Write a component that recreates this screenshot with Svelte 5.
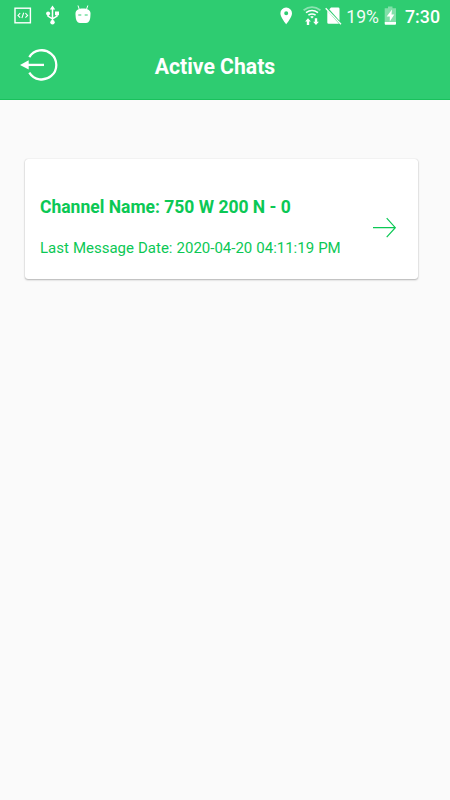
<script lang="ts">
  type Chat = {
    channelName: string;
    lastMessageDate: string;
  };

  type Props = {
    chats?: Chat[];
    onLogout?: () => void;
    onOpenChat?: (chat: Chat) => void;
  };

  let {
    chats = [{ channelName: '750 W 200 N - 0', lastMessageDate: '2020-04-20 04:11:19 PM' }],
    onLogout = () => {},
    onOpenChat = () => {}
  }: Props = $props();
</script>

<div class="screen">
  <header>
    <div class="status-bar">
      <div class="notifications">
        <svg width="18" height="32" viewBox="0 0 18 32" fill="none" stroke="#fff">
          <rect x="1" y="8.2" width="15.4" height="14.6" stroke-width="1.4" />
          <path d="M6.2 13.2 4 15.4l2.2 2.2M11.4 13.2l2.2 2.2-2.2 2.2M9.7 12.8l-1.8 5.3" stroke-width="1.1" />
        </svg>
        <svg class="usb" width="14" height="32" viewBox="0 0 14 32">
          <path d="M6.5 8v14M2 13v3.2l4.5 2.7M11 13v3.2l-4.5 2.7" fill="none" stroke="#fff" stroke-width="1.5" />
          <path d="m6.5 5.6 2.7 3.9H3.8zM9 11.6h4v3.7H9z" fill="#fff" />
          <circle cx="2.1" cy="13.4" r="2" fill="#fff" />
          <circle cx="6.5" cy="22.2" r="2.2" fill="#fff" />
        </svg>
        <svg class="robot" width="17" height="32" viewBox="0 0 17 32">
          <path d="M3 5.5 4.5 10M12.8 5.5 11.3 10" stroke="#fff" stroke-width="1" />
          <path d="M.5 13.5C.5 10.3 3.5 8.5 8 8.5s7.5 1.8 7.5 5c0 5-.8 9.5-4.5 9.5H5C1.3 23 .5 18.5.5 13.5z" fill="#fff" />
          <path d="M3.3 15h3M9.7 15h3" stroke="#2ecc71" stroke-width="1" />
        </svg>
      </div>
      <div class="system">
        <svg width="13" height="32" viewBox="0 0 13 32">
          <path
            d="M6.2 7.5A5.7 5.7 0 0 0 .4 13.2c0 4.2 5.8 11 5.8 11s5.8-6.8 5.8-11a5.7 5.7 0 0 0-5.8-5.7zm0 3.7a2 2 0 1 1 0 4 2 2 0 0 1 0-4z"
            fill="#fff"
          />
        </svg>
        <svg class="wifi" width="20" height="32" viewBox="0 0 20 32">
          <path d="M1.6 10.3Q10 4 18.4 10.3" fill="none" stroke="#fff" stroke-opacity=".45" stroke-width="1.8" />
          <path d="M4 12.7Q10 8.3 16 12.7M6.4 15.2q3.6-2.4 7.2 0" fill="none" stroke="#fff" stroke-width="1.6" />
          <path d="m8.2 16.8 1.8-.8 1.8.8-1.8 1.8z" fill="#fff" />
          <path d="m6 18.2 2.9 3.3H7.2V25H4.8v-3.5H3.1zM14 25l2.9-3.3h-1.7v-3.5h-2.4v3.5h-1.7z" fill="#fff" />
        </svg>
        <svg class="sim" width="17" height="32" viewBox="0 0 17 32">
          <path d="M6 7.5h7.2q1.3 0 1.3 1.3v12L4.3 9.3zM2.3 10.7 14 23.8H3.6q-1.3 0-1.3-1.3z" fill="#fff" />
          <path d="m.7 8.2 15.3 16" stroke="#fff" stroke-width="1.3" />
        </svg>
        <span class="percent">19%</span>
        <svg class="battery" width="13" height="32" viewBox="0 0 13 32">
          <path d="M4 6.5h4.5v1.8H12V22H.7V8.3H4z" fill="#fff" fill-opacity=".4" />
          <path d="M.7 22H12v1.8q0 .9-.9.9H1.6q-.9 0-.9-.9zM8 9.5 2.7 16.5h3.1v5l4.5-7H7.5z" fill="#fff" />
        </svg>
        <span class="clock">7:30</span>
      </div>
    </div>

    <div class="toolbar">
      <button type="button" class="logout" aria-label="Log out" onclick={onLogout}>
        <svg width="40" height="34" viewBox="0 0 40 34">
          <path d="M9.3 8.2a14.6 14.6 0 1 1 0 15.4" fill="none" stroke="#fff" stroke-width="2.3" />
          <path d="M8 15.9h16" stroke="#fff" stroke-width="2.3" />
          <path d="m0 15.9 8.7-4.7v9.4z" fill="#fff" />
        </svg>
      </button>
      <h1>Active Chats</h1>
    </div>
  </header>

  <main>
    {#each chats as chat (chat.channelName)}
      <button type="button" class="card" onclick={() => onOpenChat(chat)}>
        <span class="details">
          <span class="name">Channel Name: {chat.channelName}</span>
          <span class="date">Last Message Date: {chat.lastMessageDate}</span>
        </span>
        <svg width="24" height="22" viewBox="0 0 24 22" fill="none" stroke="#0bc855" stroke-width="1.2">
          <path d="M0 11.7h22M13.7 2.2l8.6 9.5-8.6 9.5" />
        </svg>
      </button>
    {/each}
  </main>
</div>

<style>
  :global(body) {
    background: #fafafa;
  }

  .screen {
    min-height: 800px;
    background: #fafafa;
    font-family: Roboto, sans-serif;
  }

  header {
    height: 100px;
    box-sizing: border-box;
    background: #2ecc71;
    border-bottom: 1px solid #19c15c;
    color: #fff;
  }

  .status-bar {
    display: flex;
    justify-content: space-between;
    height: 32px;
    padding: 0 10px 0 14px;
  }

  .notifications,
  .system {
    display: flex;
    align-items: center;
  }

  svg {
    display: block;
    flex: none;
  }

  .usb {
    margin-left: 14px;
  }

  .robot {
    margin-left: 15px;
  }

  .wifi {
    margin-left: 9px;
  }

  .sim {
    margin-left: 3px;
  }

  .percent {
    margin-left: 4px;
    font-size: 17.6px;
    line-height: 32px;
    padding-top: 2px;
    opacity: 0.95;
  }

  .battery {
    margin-left: 5px;
  }

  .clock {
    margin-left: 8px;
    font-size: 17.8px;
    font-weight: 500;
    line-height: 33px;
  }

  .toolbar {
    display: grid;
    grid-template-columns: 60px 1fr 100px;
    align-items: center;
    height: 67px;
    padding: 0 0 0 20px;
  }

  button {
    padding: 0;
    border: 0;
    background: none;
    color: inherit;
    font: inherit;
    text-align: left;
    cursor: pointer;
  }

  h1 {
    margin: 0;
    padding-top: 2px;
    font-size: 21.2px;
    font-weight: 700;
    line-height: 28px;
    text-align: center;
  }

  main {
    padding: 59px 32px 0 25px;
  }

  .card {
    display: flex;
    justify-content: space-between;
    align-items: center;
    width: 100%;
    height: 120px;
    padding: 15px 21px 0 15px;
    box-sizing: border-box;
    border-radius: 3px;
    background: #fff;
    box-shadow:
      0 1px 2px rgba(0, 0, 0, 0.28),
      0 0 1px rgba(0, 0, 0, 0.2);
    color: #0bc855;
  }

  .details {
    display: flex;
    flex-direction: column;
    gap: 19px;
  }

  .name {
    font-size: 17.5px;
    font-weight: 700;
    line-height: 23px;
    white-space: nowrap;
  }

  .date {
    font-size: 15px;
    line-height: 20px;
    word-spacing: 0.3px;
    white-space: nowrap;
  }
</style>
